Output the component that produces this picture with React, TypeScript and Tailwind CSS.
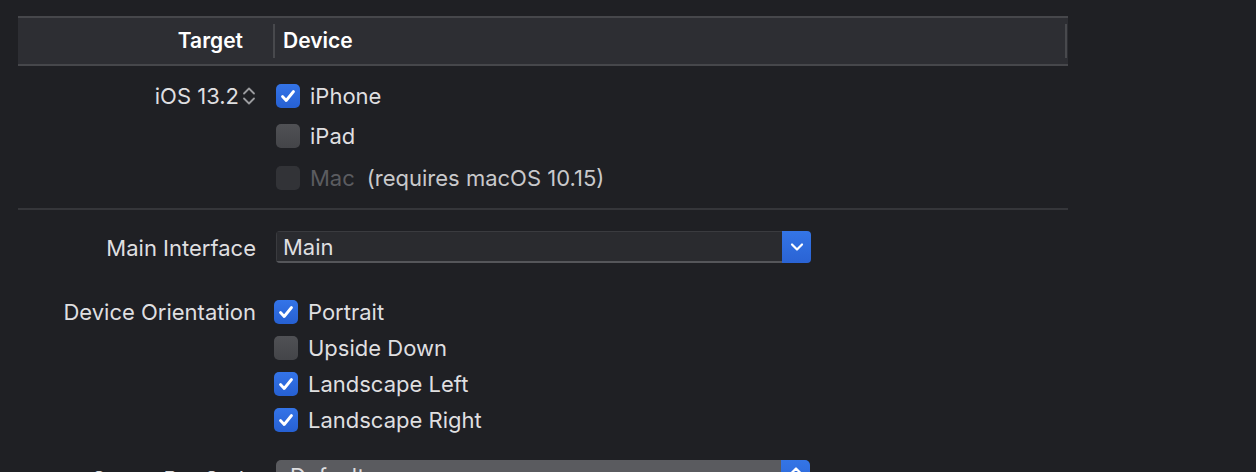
import React from "react";

function Check({ checked, disabled }: { checked?: boolean; disabled?: boolean }) {
  if (checked) {
    return (
      <div className="w-[24px] h-[24px] rounded-[5px] bg-gradient-to-b from-[#3474e8] to-[#2660d2] flex items-center justify-center shrink-0">
        <svg width="18" height="18" viewBox="0 0 18 18">
          <polyline points="3.5,9.5 7.2,13.5 14.5,4.5" fill="none" stroke="#ffffff" strokeWidth="2.8" strokeLinecap="round" strokeLinejoin="round" />
        </svg>
      </div>
    );
  }
  if (disabled) {
    return <div className="w-[24px] h-[24px] rounded-[5px] bg-[#323337] shrink-0" />;
  }
  return <div className="w-[24px] h-[24px] rounded-[5px] bg-gradient-to-b from-[#505155] to-[#444549] shrink-0" />;
}

function CheckRow({ label, checked, disabled, extra, className }: { label: string; checked?: boolean; disabled?: boolean; extra?: string; className?: string }) {
  return (
    <div className={"flex items-center gap-[10px] " + (className ?? "")}>
      <Check checked={checked} disabled={disabled} />
      <span className={disabled ? "text-[#5b5c60]" : "text-[#dfdfe0]"}>{label}</span>
      {extra && <span className="ml-[2px] text-[#c9c9cb]">{extra}</span>}
    </div>
  );
}

export default function App() {
  return (
    <div
      className="w-[1256px] h-[472px] overflow-hidden bg-[#1f2024] text-[22px] text-[#dfdfe0]"
      style={{ fontFamily: "Inter, 'Noto Sans', sans-serif" }}
    >
      <div className="ml-[18px] w-[1050px] pt-[16px]">
        {/* Header */}
        <div className="h-[50px] border-t-2 border-b-2 border-[#46474b] bg-[#2d2e33] flex items-center text-[21px]">
          <div className="w-[255px] text-right pr-[30px] font-semibold text-white">Target</div>
          <div className="w-[2px] h-[34px] bg-[#48494d]" />
          <div className="flex-1 pl-[8px] font-semibold text-white">Device</div>
          <div className="w-[2px] h-[34px] bg-[#48494d] mr-[1px]" />
        </div>

        {/* Deployment info */}
        <div className="flex pt-[10px]">
          <div className="w-[258px] h-[40px] flex items-center justify-end pr-[20px]">
            <span>iOS 13.2</span>
            <svg width="14" height="20" viewBox="0 0 14 20" className="ml-[3px]">
              <polyline points="2,7.5 7,2.5 12,7.5" fill="none" stroke="#9b9c9f" strokeWidth="1.8" strokeLinecap="round" strokeLinejoin="round" />
              <polyline points="2,12.5 7,17.5 12,12.5" fill="none" stroke="#9b9c9f" strokeWidth="1.8" strokeLinecap="round" strokeLinejoin="round" />
            </svg>
          </div>
          <div className="flex flex-col">
            <CheckRow label="iPhone" checked className="h-[40px]" />
            <CheckRow label="iPad" className="h-[40px]" />
            <CheckRow label="Mac" disabled extra="(requires macOS 10.15)" className="h-[40px] mt-[2px]" />
          </div>
        </div>

        <div className="mt-[10px] h-[2px] bg-[#35363a]" />

        {/* Main Interface */}
        <div className="flex h-[32px] mt-[21px]">
          <div className="w-[258px] h-[32px] flex items-center justify-end pr-[20px] pt-[2px]">Main Interface</div>
          <div className="w-[535px] h-[32px] flex rounded-[4px] overflow-hidden">
            <div className="flex-1 flex items-center pl-[6px] pt-[2px] bg-[#2a2b2f] border-t border-[#3a3b3f] border-b-2 border-b-[#55565a] border-l border-l-[#3a3b3f]">
              Main
            </div>
            <div className="w-[29px] bg-gradient-to-b from-[#3475e6] to-[#2a63d4] flex items-center justify-center">
              <svg width="14" height="10" viewBox="0 0 14 10">
                <polyline points="2,2.5 7,7.5 12,2.5" fill="none" stroke="#ffffff" strokeWidth="2.2" strokeLinecap="round" strokeLinejoin="round" />
              </svg>
            </div>
          </div>
        </div>

        {/* Device Orientation */}
        <div className="flex mt-[31px]">
          <div className="w-[256px] h-[36px] flex items-center justify-end pr-[18px]">Device Orientation</div>
          <div className="flex flex-col">
            <CheckRow label="Portrait" checked className="h-[36px]" />
            <CheckRow label="Upside Down" className="h-[36px]" />
            <CheckRow label="Landscape Left" checked className="h-[36px]" />
            <CheckRow label="Landscape Right" checked className="h-[36px]" />
          </div>
        </div>

        {/* Status Bar Style */}
        <div className="flex items-start mt-[22px]">
          <div className="w-[258px] text-right pr-[19px] pt-[3px]">Status Bar Style</div>
          <div className="w-[534px] h-[32px] flex rounded-[5px] overflow-hidden">
            <div className="flex-1 flex items-center pl-[14px] bg-[#5a5b5f]">Default</div>
            <div className="w-[29px] bg-gradient-to-b from-[#3475e6] to-[#2a63d4] flex flex-col items-center pt-[6px]">
              <svg width="14" height="10" viewBox="0 0 14 10">
                <polyline points="2,7.5 7,2.5 12,7.5" fill="none" stroke="#ffffff" strokeWidth="2.2" strokeLinecap="round" strokeLinejoin="round" />
              </svg>
            </div>
          </div>
        </div>
      </div>
    </div>
  );
}
